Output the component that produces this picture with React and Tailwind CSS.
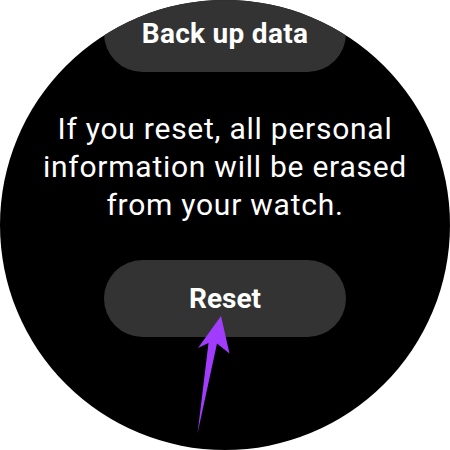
export default function App() {
  return (
    <div className="w-[450px] h-[450px] bg-white" style={{ fontFamily: "Roboto, 'Noto Sans', sans-serif" }}>
      <div className="relative w-[450px] h-[450px] rounded-full bg-black overflow-hidden flex flex-col items-center">
        <div className="mt-[-5px] w-[242px] h-[77px] shrink-0 rounded-full bg-[#333333] flex items-center justify-center">
          <span className="text-white text-[28px] font-bold tracking-[0.3px]">Back up data</span>
        </div>

        <p className="mt-[38px] text-center text-white text-[30px] leading-[38px] tracking-[0.75px] whitespace-nowrap">
          If you reset, all personal
          <br />
          information will be erased
          <br />
          from your watch.
        </p>

        <div className="mt-[36px] w-[242px] h-[77px] shrink-0 rounded-full bg-[#333333] flex items-center justify-center">
          <span className="text-white text-[28px] font-bold">Reset</span>
        </div>

        <svg className="absolute left-0 top-0" width="450" height="450" viewBox="0 0 450 450">
          <polygon
            points="221,316 229.5,353.5 217,343.5 197.5,433.5 208.5,343 198,348"
            fill="#a23cfc"
          />
        </svg>
      </div>
    </div>
  );
}
